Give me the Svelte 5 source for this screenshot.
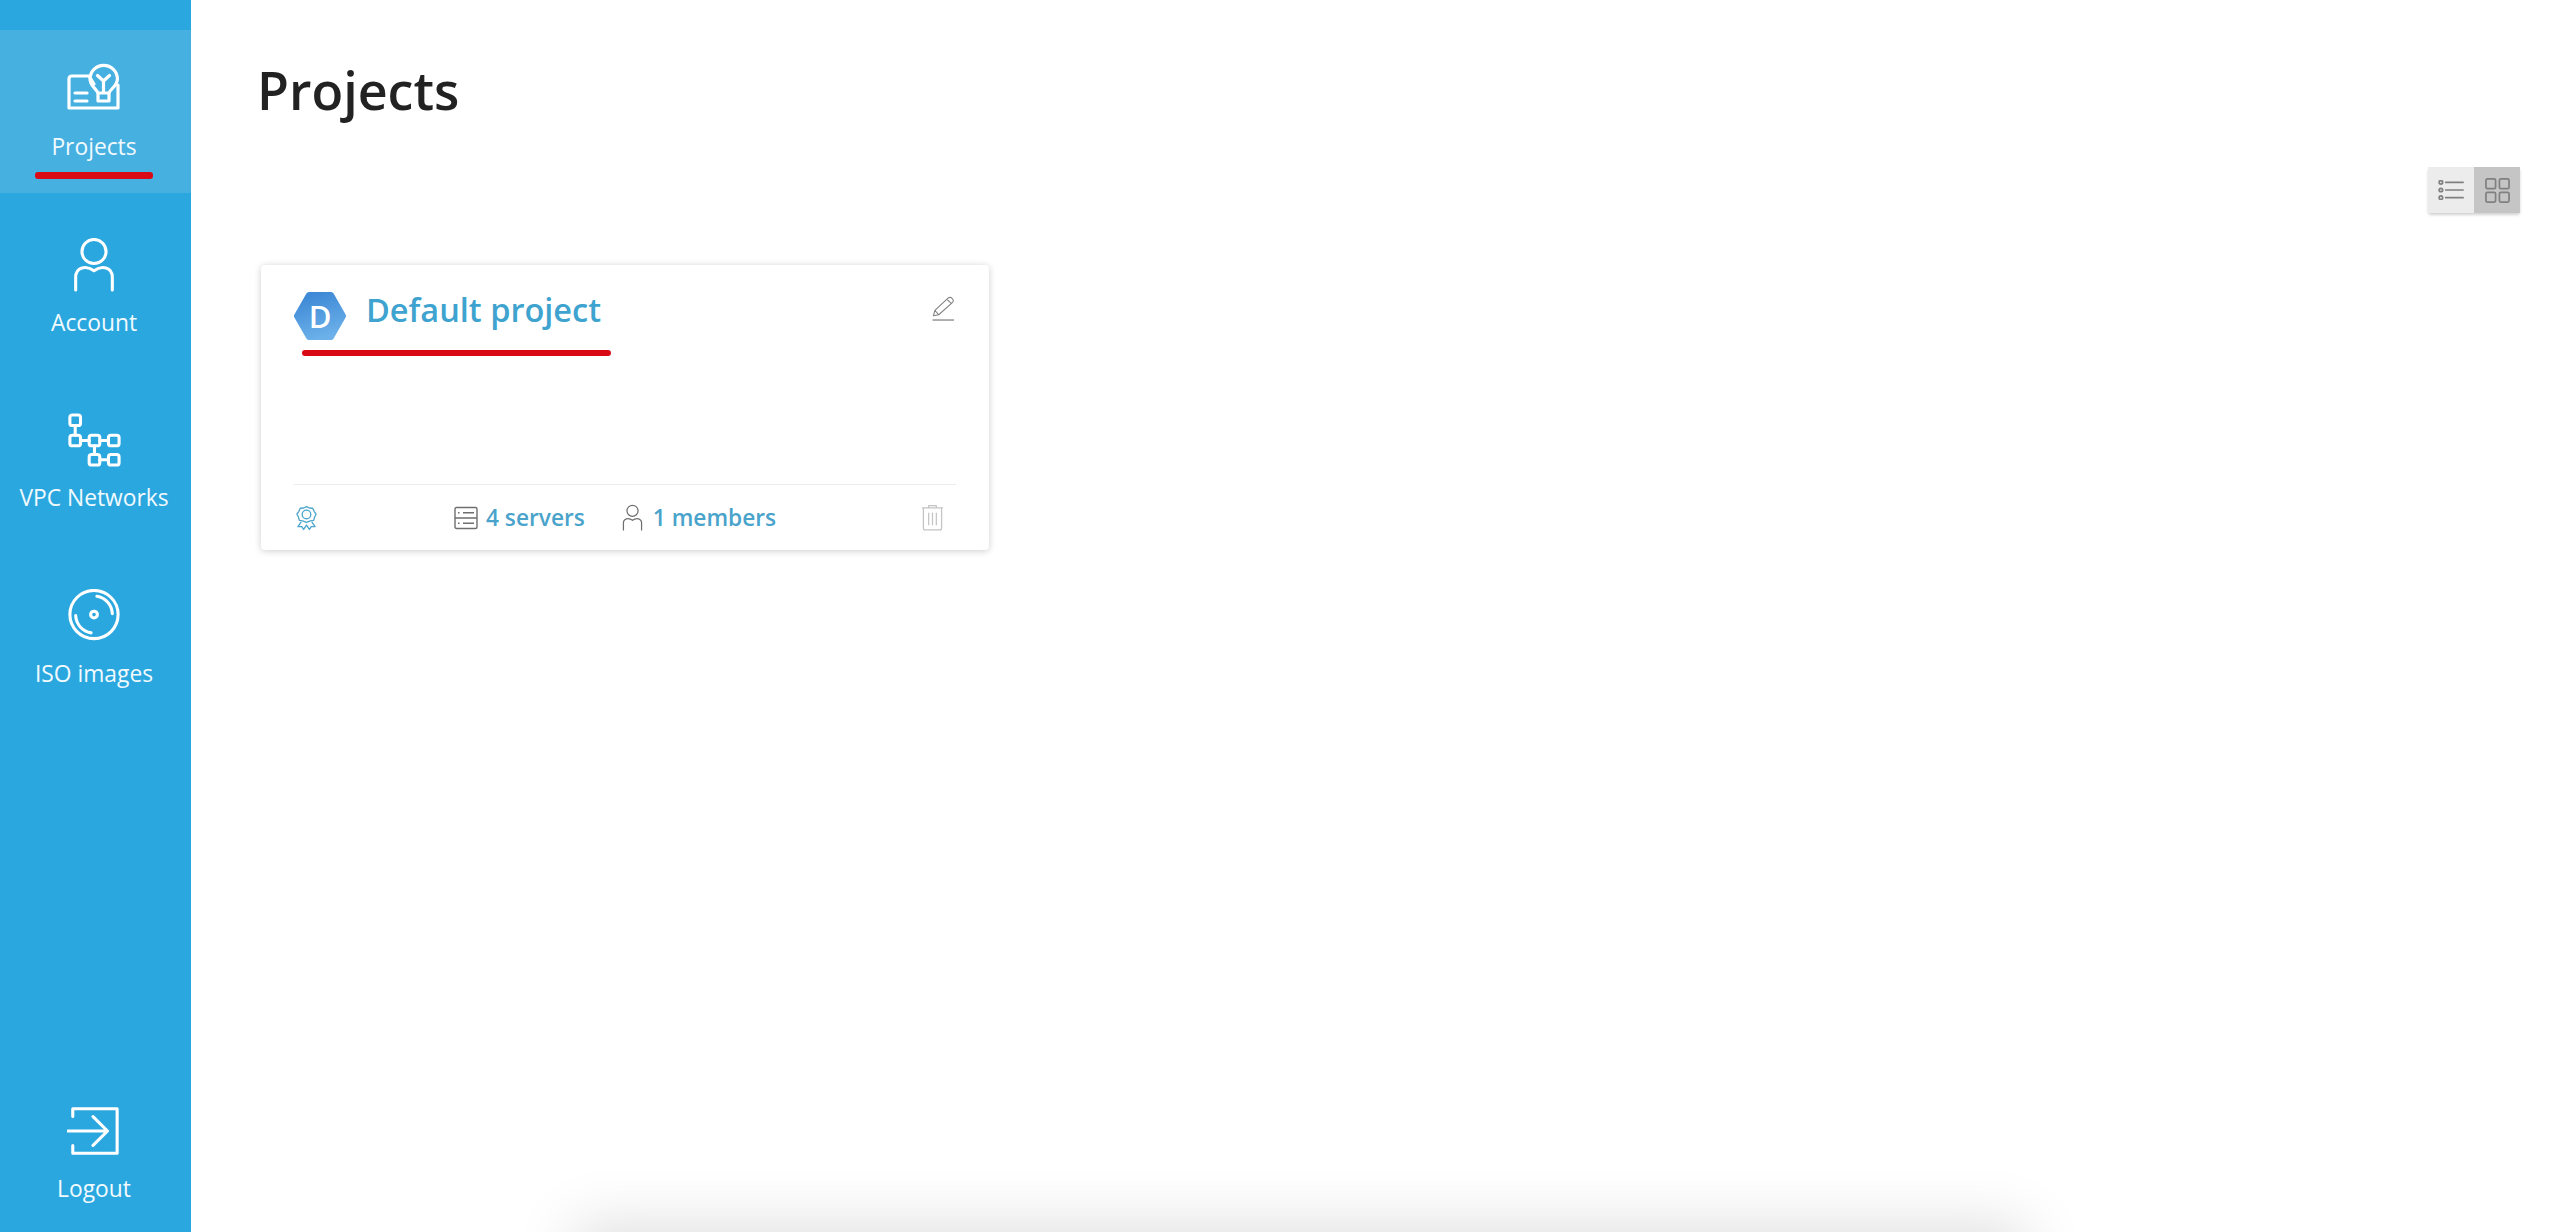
<script>
  const topItems = [
    { label: 'Projects', icon: 'projects', active: true },
    { label: 'Account', icon: 'account' },
    { label: 'VPC Networks', icon: 'vpc' },
    { label: 'ISO images', icon: 'iso' }
  ];
</script>

{#snippet navIcon(name)}
  {#if name === 'projects'}
    <svg class="nav-icon" viewBox="67 62 54 54" fill="none" stroke="#fff" stroke-width="3.200" stroke-linecap="round" stroke-linejoin="round">
      <path d="M89 76 H72 Q69 76 69 79 V108 H118 V85 M89 76 L94 84" />
      <path d="M98 93 C96 88 90 86 90 79 A13.700 13.700 0 0 1 117.400 79 C117.400 86 111 88 109 93 Z" />
      <path d="M98 93 V101 H109 V93 M103.500 92 V81 M97.500 75.500 L103.500 81 L109.500 75.500" />
      <path d="M75 93 H87 M75 101 H87" />
    </svg>
  {:else}
    <svg class="nav-icon" viewBox="0 0 56 56" fill="none" stroke="#fff" stroke-width="3.200" stroke-linecap="round" stroke-linejoin="round">
      {#if name === 'account'}
        <circle cx="28" cy="14" r="12.500" />
        <path d="M9 54 V41 C9 30 20 28 28 34 C36 28 47 30 47 41 V54" />
      {:else if name === 'vpc'}
        <rect x="3" y="2" width="11" height="11" rx="2.500" />
        <rect x="3" y="23" width="11" height="11" rx="2.500" />
        <rect x="23" y="23" width="11" height="11" rx="2.500" />
        <rect x="43" y="23" width="11" height="11" rx="2.500" />
        <rect x="23" y="43" width="11" height="11" rx="2.500" />
        <rect x="43" y="43" width="11" height="11" rx="2.500" />
        <path d="M8.500 13 V23 M14 28.500 H23 M34 28.500 H43 M28.500 34 V43 M34 48.500 H43" />
      {:else if name === 'iso'}
        <circle cx="28" cy="26.500" r="25" />
        <circle cx="28" cy="26.500" r="3.500" />
        <path d="M31 7.500 A19 19 0 0 1 47 25.500 M25 45.500 A19 19 0 0 1 9 27.500" />
      {:else}
        <path d="M6 13 V5 H52 V51 H6 V43" />
        <path d="M1 28 H40 M27 13 L42 28 L27 43" />
      {/if}
    </svg>
  {/if}
{/snippet}

<div class="page">
  <aside class="sidebar">
    <nav class="top-nav">
      {#each topItems as item}
        <a class="nav-item" class:active={item.active} href="#top">
          {@render navIcon(item.icon)}
          <span>{item.label}</span>
          {#if item.active}<i class="mark nav-mark"></i>{/if}
        </a>
      {/each}
    </nav>
    <a class="nav-item logout" href="#top">
      {@render navIcon('logout')}
      <span>Logout</span>
    </a>
  </aside>

  <main class="content">
    <h1>Projects</h1>

    <div class="toolbar">
      <div class="toggle">
        <button class="list" aria-label="List view">
          <svg viewBox="0 0 28 20" fill="none" stroke="#808080" stroke-width="1.800" stroke-linecap="round">
            <circle cx="3" cy="2" r="1.800" />
            <circle cx="3" cy="10" r="1.800" />
            <circle cx="3" cy="18" r="1.800" />
            <path d="M8 2 H26 M8 10 H26 M8 18 H26" />
          </svg>
        </button>
        <button class="grid" aria-label="Grid view">
          <svg viewBox="0 0 26 26" fill="none" stroke="#808080" stroke-width="1.800">
            <rect x="1" y="1" width="10" height="10" rx="1.500" />
            <rect x="15" y="1" width="10" height="10" rx="1.500" />
            <rect x="1" y="15" width="10" height="10" rx="1.500" />
            <rect x="15" y="15" width="10" height="10" rx="1.500" />
          </svg>
        </button>
      </div>
    </div>

    <article class="card">
      <header class="card-head">
        <div class="avatar">
          <svg class="hex" viewBox="0 0 52 48">
            <defs>
              <linearGradient id="hex-fill" x1="0.350" y1="0" x2="0.650" y2="1">
                <stop offset="0" stop-color="#3f8ad6" />
                <stop offset="1" stop-color="#6cb1ea" />
              </linearGradient>
            </defs>
            <polygon points="15,3 37,3 49,24 37,45 15,45 3,24" fill="url(#hex-fill)" stroke="url(#hex-fill)" stroke-width="6" stroke-linejoin="round" />
          </svg>
          <span>D</span>
        </div>
        <a class="card-title" href="#top">Default project</a>
        <svg class="edit" viewBox="0 0 24 26" fill="none" stroke="#808080" stroke-width="1.100" stroke-linejoin="round">
          <path d="M1.500 20 L3 14.500 L17 1.500 C18.500 0.500 20.500 1 21.500 2.500 C22.500 4 22.500 5 21.500 6 L7 19 Z M15.500 3 L20.500 7.500 M3 14.500 L7 19" />
          <path d="M0.500 24.500 H23" stroke-width="1.300" />
        </svg>
        <i class="mark title-mark"></i>
      </header>

      <footer class="card-foot">
        <svg class="award" viewBox="0 0 22 26" fill="none" stroke="#4da6cc" stroke-width="1.400" stroke-linejoin="round">
          <path d="M11 1 L14 2.500 L17.500 2.800 L19 6 L21 9 L19.500 12 L18.500 15.500 L15 16 L11 17.500 L7 16 L3.500 15.500 L2.500 12 L1 9 L3 6 L4.500 2.800 L8 2.500 Z" />
          <circle cx="11" cy="9.300" r="4.500" />
          <path d="M5.500 17 L2 22 L6 22 L8 25 L11 20.500 L14 25 L16 22 L20 22 L16.500 17" />
        </svg>
        <div class="stats">
          <a class="stat" href="#top">
            <svg class="server" viewBox="0 0 24 24" fill="none" stroke="#6f6f6f" stroke-width="1.400">
              <rect x="1" y="1.500" width="22" height="21" rx="1.500" />
              <path d="M1 12 H23 M9 6.800 H20 M9 17.300 H20 M4 6.800 H5.500 M4 17.300 H5.500" />
            </svg>
            4 servers
          </a>
          <a class="stat" href="#top">
            <svg class="member" viewBox="0 0 22 28" fill="none" stroke="#6f6f6f" stroke-width="1.300" stroke-linecap="round">
              <circle cx="11" cy="7" r="5.800" />
              <path d="M1.500 27 V20 C1.500 15 7 14 11 17 C15 14 20.500 15 20.500 20 V27" />
            </svg>
            1 members
          </a>
        </div>
        <svg class="trash" viewBox="0 0 24 28" fill="none" stroke="#c4c4c4" stroke-width="1.300" stroke-linejoin="round">
          <path d="M1 4 H23 M8 4 V1.500 H16 V4 M2.500 4 V25 C2.500 26.500 3.500 27 4.500 27 H19.500 C20.500 27 21.500 26.500 21.500 25 V4 M8 9 V22 M12 9 V22 M16 9 V22" />
        </svg>
      </footer>
    </article>
  </main>

  <div class="bottom-glow"></div>
</div>

<style>
  :global(body) {
    margin: 0;
    background: #fff;
    overflow: hidden;
    font-family: "Open Sans", "Noto Sans", sans-serif;
  }

  .page {
    position: relative;
    display: flex;
    width: 2560px;
    height: 1232px;
    overflow: hidden;
  }

  .sidebar {
    display: flex;
    flex-direction: column;
    justify-content: space-between;
    flex: none;
    box-sizing: border-box;
    width: 191px;
    height: 100%;
    padding: 30px 0 26px;
    background: #2aa7de;
  }

  .top-nav {
    display: flex;
    flex-direction: column;
    gap: 12.500px;
  }

  .nav-item {
    position: relative;
    display: flex;
    flex-direction: column;
    align-items: center;
    box-sizing: border-box;
    height: 163px;
    padding: 32px 3px 0 0;
    color: #f1faff;
    font-size: 22.800px;
    line-height: 34px;
    text-decoration: none;
  }

  .nav-item.active {
    background: #46b0e1;
  }

  .nav-item span {
    margin-top: 14px;
    white-space: nowrap;
  }

  .nav-icon {
    display: block;
    flex: none;
    width: 54px;
    height: 54px;
  }

  .logout {
    height: auto;
    padding-top: 0;
  }

  .mark {
    position: absolute;
    display: block;
    height: 6px;
    border-radius: 3px;
    background: #d90a16;
  }

  .nav-mark {
    left: 35px;
    bottom: 14px;
    width: 118px;
    height: 7px;
  }

  .content {
    flex: 1;
    min-width: 0;
    box-sizing: border-box;
    padding: 0 40px 0 66px;
  }

  h1 {
    margin: 0;
    padding-top: 54px;
    color: #222;
    font-size: 52px;
    font-weight: 600;
    line-height: 72px;
  }

  .toolbar {
    display: flex;
    justify-content: flex-end;
    margin-top: 41px;
  }

  .toggle {
    display: flex;
    height: 46px;
    border-radius: 3px;
    box-shadow: 0 2px 3px rgba(0, 0, 0, 0.18);
  }

  .toggle button {
    display: flex;
    align-items: center;
    justify-content: center;
    width: 46px;
    padding: 0;
    border: 0;
  }

  .list {
    background: #ececec;
  }

  .list svg {
    width: 27px;
    height: 20px;
  }

  .grid {
    background: #c5c5c5;
  }

  .grid svg {
    width: 25px;
    height: 25px;
  }

  .card {
    display: flex;
    flex-direction: column;
    justify-content: space-between;
    box-sizing: border-box;
    width: 728px;
    height: 285px;
    margin: 52px 0 0 4px;
    padding: 0 33px;
    border-radius: 4px;
    background: #fff;
    box-shadow: 0 1px 7px rgba(0, 0, 0, 0.2);
  }

  .card-head {
    position: relative;
    display: flex;
    align-items: flex-start;
    padding-top: 27px;
  }

  .avatar {
    position: relative;
    display: flex;
    align-items: center;
    justify-content: center;
    flex: none;
    width: 52px;
    height: 48px;
    margin-right: 20px;
    color: #fff;
    font-size: 31px;
    font-weight: 600;
  }

  .hex {
    position: absolute;
    inset: 0;
    width: 100%;
    height: 100%;
  }

  .avatar span {
    position: relative;
  }

  .card-title {
    flex: 1;
    margin-top: -2px;
    color: #3ea3cf;
    font-size: 32.500px;
    font-weight: 600;
    line-height: 40px;
    text-decoration: none;
  }

  .edit {
    flex: none;
    width: 23px;
    height: 26px;
    margin: 4px 1px 0 0;
  }

  .title-mark {
    left: 8px;
    top: 85px;
    width: 309px;
  }

  .card-foot {
    position: relative;
    display: flex;
    align-items: center;
    height: 65px;
    padding-left: 2px;
    border-top: 1px solid #ececec;
  }

  .award {
    flex: none;
    width: 21px;
    height: 26px;
  }

  .stats {
    display: flex;
    gap: 37px;
    margin-left: 137px;
  }

  .stat {
    display: flex;
    align-items: center;
    gap: 8px;
    color: #4aa3cb;
    font-size: 22.700px;
    font-weight: 600;
    line-height: 32px;
    text-decoration: none;
    white-space: nowrap;
  }

  .server {
    width: 24px;
    height: 24px;
  }

  .member {
    width: 21px;
    height: 27px;
    margin-right: 2px;
  }

  .trash {
    flex: none;
    width: 23px;
    height: 27px;
    margin-left: auto;
    margin-right: 12px;
  }

  .bottom-glow {
    position: absolute;
    left: 590px;
    top: 1240px;
    width: 1420px;
    height: 60px;
    box-shadow: 0 0 60px 16px rgba(0, 0, 0, 0.13);
  }
</style>
